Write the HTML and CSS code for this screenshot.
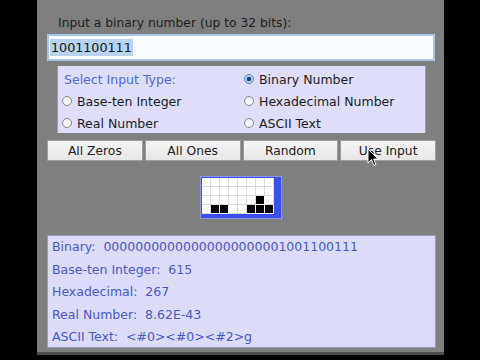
FILE: index.html
```html
<!DOCTYPE html>
<html>
<head>
<meta charset="utf-8">
<link rel="stylesheet" href="styles.css">
</head>
<body>
<div class="panel">
  <div class="prompt">Input a binary number (up to 32 bits):</div>
  <div class="field"><span class="sel">1001100111</span></div>
  <div class="types">
    <div class="cell head">Select Input Type:</div>
    <div class="cell"><span class="radio on"></span>Binary Number</div>
    <div class="cell"><span class="radio"></span>Base-ten Integer</div>
    <div class="cell"><span class="radio"></span>Hexadecimal Number</div>
    <div class="cell"><span class="radio"></span>Real Number</div>
    <div class="cell"><span class="radio"></span>ASCII Text</div>
  </div>
  <div class="buttons">
    <div class="btn">All Zeros</div>
    <div class="btn">All Ones</div>
    <div class="btn">Random</div>
    <div class="btn">Use Input</div>
    <svg class="cursor" width="12" height="19" viewBox="0 0 12 19"><path d="M1 1 L1 15 L4.5 11.5 L7 17.5 L9 16.6 L6.6 11 L11 11 Z" fill="#000" stroke="#fff" stroke-width="1"/></svg>
  </div>
  <div class="bitwrap">
    <div class="bits">
      <i></i><i></i><i></i><i></i><i></i><i></i><i></i><i></i>
      <i></i><i></i><i></i><i></i><i></i><i></i><i></i><i></i>
      <i></i><i></i><i></i><i></i><i></i><i></i><i class="b"></i><i></i>
      <i></i><i class="b"></i><i class="b"></i><i></i><i></i><i class="b"></i><i class="b"></i><i class="b"></i>
    </div>
  </div>
  <div class="out">
    <div class="line">Binary:&nbsp; 00000000000000000000001001100111</div>
    <div class="line">Base-ten Integer:&nbsp; 615</div>
    <div class="line">Hexadecimal:&nbsp; 267</div>
    <div class="line">Real Number:&nbsp; 8.62E-43</div>
    <div class="line">ASCII Text:&nbsp; &lt;#0&gt;&lt;#0&gt;&lt;#2&gt;g</div>
  </div>
</div>
</body>
</html>
```
FILE: styles.css
```css
html, body {
  margin: 0;
  padding: 0;
  background: #000;
  width: 480px;
  height: 360px;
  overflow: hidden;
  font-family: "DejaVu Sans", "Liberation Sans", sans-serif;
}
.panel {
  margin-left: 37px;
  width: 407px;
  height: 355px;
  background: #7f7f7f;
  border-bottom: 3px solid #4e4e4e;
  padding: 0 0 0 10px;
  box-sizing: border-box;
  display: flex;
  flex-direction: column;
}
.prompt {
  margin-top: 15px;
  margin-left: 11px;
  font-size: 12.3px;
  line-height: 16px;
  color: #1e1e1e;
}
.field {
  margin-top: 3px;
  width: 388px;
  height: 27px;
  box-sizing: border-box;
  background: #fafdff;
  border: 2px solid #a9c6e6;
  padding: 4px 0 0 1px;
  font-size: 12.7px;
  line-height: 15px;
  color: #111;
}
.sel {
  background: #b9d2f0;
  padding: 1px 1px;
}
.types {
  margin-top: 5px;
  margin-left: 10px;
  width: 369px;
  height: 67px;
  box-sizing: border-box;
  background: #dedefa;
  border-left: 1px solid #9a9ab0;
  border-right: 1px solid #9a9ab0;
  display: grid;
  grid-template-columns: 182px 1fr;
  grid-auto-rows: 22px;
  padding: 2px 0 0 4px;
}
.cell {
  display: flex;
  align-items: center;
  font-size: 12.5px;
  color: #1c1c28;
}
.cell.head {
  color: #5266e6;
  padding-left: 2px;
}
.radio {
  width: 10px;
  height: 10px;
  border-radius: 50%;
  box-sizing: border-box;
  border: 1px solid #8a8a8a;
  background: radial-gradient(circle at 50% 70%, #ffffff 0%, #e6e6e6 100%);
  margin-right: 5px;
  position: relative;
}
.radio.on {
  border-color: #5a7fb8;
  background: radial-gradient(circle, #1d3f7a 0 2px, #a9c9ee 2.5px, #d8e8fa 100%);
}
.buttons {
  margin-top: 7px;
  width: 389px;
  height: 21px;
  display: flex;
  gap: 2px;
  position: relative;
}
.btn {
  flex: 1;
  box-sizing: border-box;
  border: 1px solid #9d9d9d;
  background: linear-gradient(#f4f4f4, #e6e6e6);
  font-size: 12.3px;
  color: #222;
  display: flex;
  align-items: center;
  justify-content: center;
}
.cursor {
  position: absolute;
  left: 320px;
  top: 8px;
}
.bitwrap {
  margin-top: 15px;
  margin-left: 153px;
  width: 82px;
  height: 43px;
  box-sizing: border-box;
  background: #3a4ef2;
  border: 1px solid #8f95e8;
  padding: 1px 0 0 1px;
}
.bits {
  display: grid;
  grid-template-columns: repeat(8, 9px);
  grid-template-rows: repeat(4, 9px);
  width: 72px;
  height: 36px;
  background: #fff;
}
.bits i {
  box-sizing: border-box;
  border-right: 1px solid #dcdcdc;
  border-bottom: 1px solid #dcdcdc;
}
.bits i.b {
  background: #000;
  border-color: #fff;
}
.out {
  margin-top: 16px;
  width: 389px;
  height: 113px;
  box-sizing: border-box;
  background: #dcdcfa;
  border: 1px solid #9a9aae;
  padding: 2px 0 0 4px;
}
.line {
  height: 22.5px;
  line-height: 18px;
  font-size: 12.5px;
  color: #4a58cc;
  white-space: nowrap;
}
```
